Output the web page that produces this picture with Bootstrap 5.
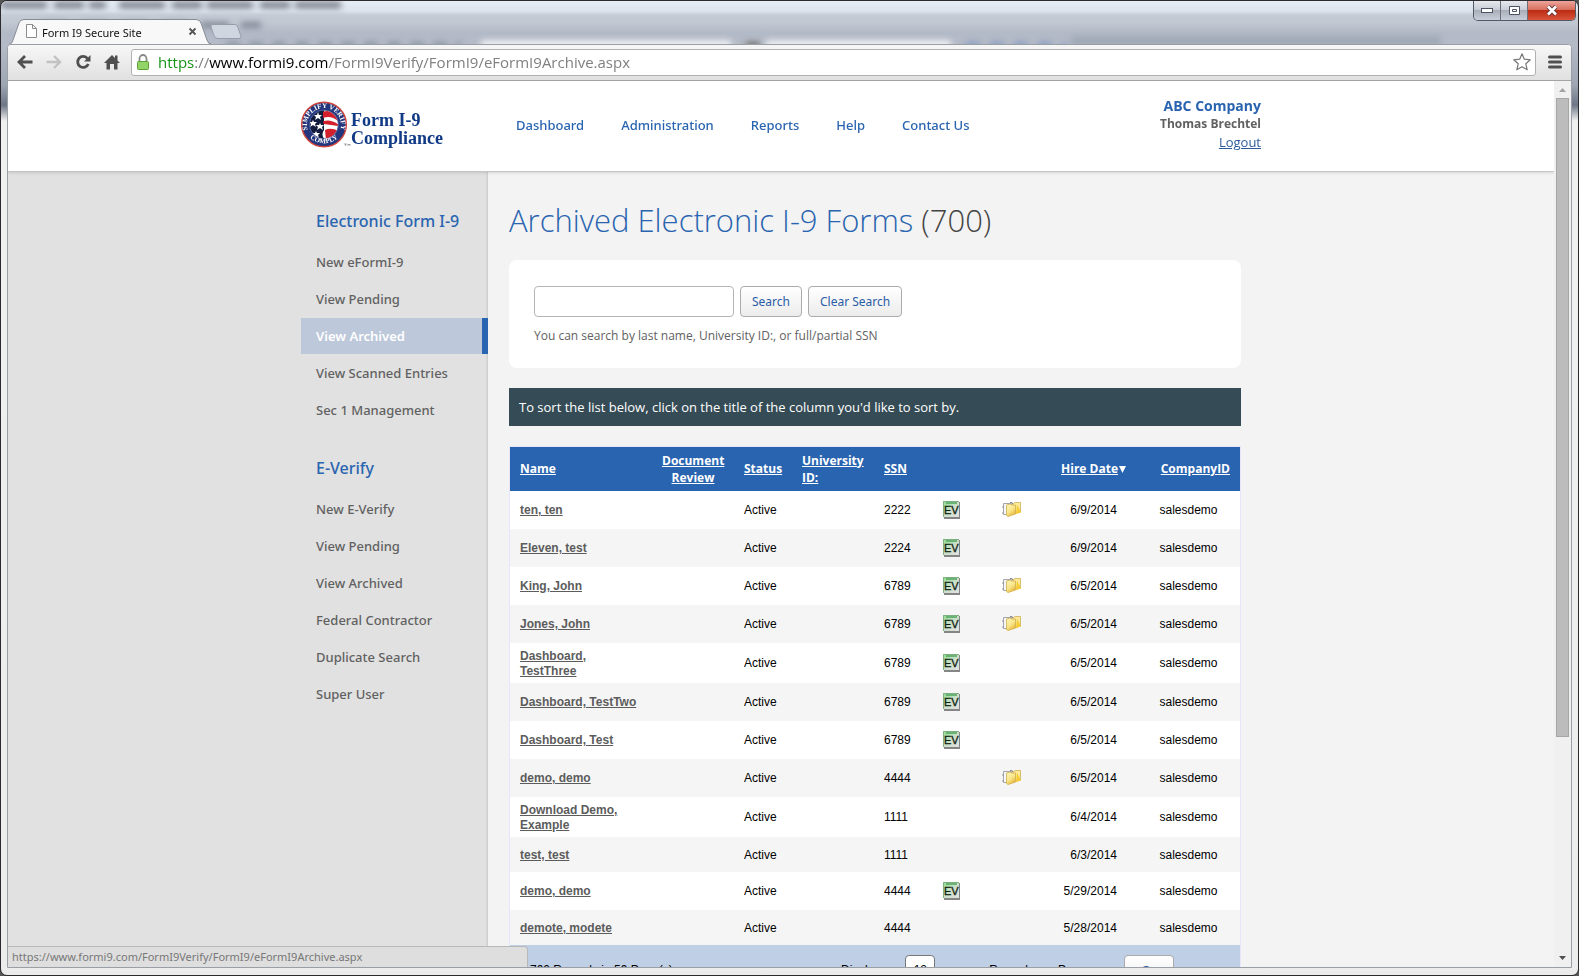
<!DOCTYPE html>
<html lang="en">
<head>
<meta charset="utf-8">
<meta name="viewport" content="width=device-width, initial-scale=1">
<title>Form I9 Secure Site</title>
<link href="https://cdn.jsdelivr.net/npm/bootstrap@5.3.0/dist/css/bootstrap.min.css" rel="stylesheet">
<style>
  :root { --blue: #2964b0; --gray: #616161; }
  body { font-family: "Open Sans", "Noto Sans", sans-serif; font-size: 13px; line-height: 18px; color: var(--gray); background: #555; }
  a { text-decoration: none; }

  /* Window frame */
  .win { border: 1px solid #2b2b2f; border-radius: 7px; padding: 0 6px; overflow: hidden; background: linear-gradient(#e6edf6 0, #dde4ee 10px, #c6ccd6 14px, #c0c7d1 22px, #b3bac7 32px, #b5bbc7 44px, #9ea6b3 84px, #6d7686 104px, #f0f0f0 120px, #ececec 100%); }
  .titlebar { height: 44px; }
  .haze { left: 0; top: 0; width: 100%; height: 46px; }
  .tab-box { width: 206px; height: 25px; margin-left: 2px; color: #111; font: 12px/24px "Noto Sans", sans-serif; }
  .tab-box span { font-size: 11px; padding-top: 3px; }
  .newtab { margin-left: -6px; }
  .plain-btn { border: 0; background: none; padding: 0; line-height: 0; }
  .caps { right: -4px; top: 0; height: 20px; border: 1px solid #555b66; border-top: 0; border-radius: 0 0 5px 5px; overflow: hidden; }
  .caps button { width: 27px; height: 19px; border: 0; border-right: 1px solid #6a707a; padding: 0; line-height: 0; background: linear-gradient(#e6e9ee, #c9ced6 45%, #a9aeb8 50%, #c9cfda); }
  .caps button:last-child { width: 47px; border: 0; background: linear-gradient(#eda49b, #d9705f 45%, #bc2c14 50%, #d8543a); }
  .chrome { margin-bottom: 7px; border: 1px solid #9a9ea5; border-radius: 4px 4px 0 0; background: #fff; }
  .toolbar { height: 36px; padding: 0 9px; background: linear-gradient(#f7f7f7, #e0e0e0); border-bottom: 1px solid #a3a3a3; }
  .tools { gap: 13px; margin-right: 11px; }
  .omnibox { height: 27px; border: 1px solid #b0b0b0; border-radius: 3px; background: #fff; padding: 0 4px; }
  .url { font: 15px/24px "Open Sans", sans-serif; color: #808080; white-space: nowrap; }
  .url .scheme { color: #179317; }
  .url .host { color: #000; }

  /* Site header */
  .site { width: 960px; max-width: 100%; margin: 0 auto; }
  .masthead { height: 91px; background: #fff; border-bottom: 1px solid #c5c5c5; box-shadow: 0 1px 3px rgba(0,0,0,.12); position: relative; z-index: 1; }
  .brand-link { margin-top: 20px; }
  .brand-text { font: bold 18px/18px "Liberation Serif", serif; color: #103a85; padding-top: 10px; }
  .mainnav { gap: 37px; margin: 35px 0 0 73px; }
  .mainnav a { color: var(--blue); font-family: "Noto Sans", sans-serif; font-weight: 500; }
  .acct { text-align: right; margin-top: 16px; }
  .acct a { color: #2b5a9a; text-decoration: underline; line-height: 20px; }
  .acct .firm { font-size: 14px; font-weight: 700; color: var(--blue); }
  .acct .who { font-size: 12px; font-weight: 700; line-height: 17px; }

  /* Sidebar */
  .viewport { background: linear-gradient(90deg, #e1e1e1 50%, #f3f3f3 50%); overflow: hidden; }
  .side { width: 187px; padding-top: 9px; background: #e1e1e1; box-shadow: inset -2px 0 2px -1px #c8c8c8; }
  .pane { background: #f3f3f3; }
  .side h2 { font: 500 16px/20px "Noto Sans", sans-serif; color: var(--blue); padding-left: 15px; margin: 30px 0 14px; }
  .side nav { margin-top: -1px; }
  .side a { display: block; height: 36px; line-height: 36px; margin-bottom: 1px; padding-left: 15px; color: var(--gray); font-family: "Noto Sans", sans-serif; font-weight: 500; }
  .side a.on { background: #bdc8da; color: #fff; font-weight: 600; border-right: 6px solid var(--blue); }

  /* Main column */
  .main { width: 732px; margin-left: 21px; }
  .main h1 { font-size: 31px; line-height: 40px; font-weight: 300; color: var(--blue); margin: 28px 0 20px; }
  .main h1 span { color: #444; }
  .searchbox { background: #fff; border-radius: 8px; height: 108px; padding: 26px 25px; margin-bottom: 20px; }
  .field { height: 31px; width: 200px; border: 1px solid #b5b5b5; border-radius: 4px; background: #fff; }
  .gbtn { height: 31px; border: 1px solid #ababab; border-radius: 4px; background: linear-gradient(#fff, #ececec); color: #2a5ba5; padding: 1px 11px 0; font: 12px/18px "Noto Sans", sans-serif; }
  .tools-row { gap: 6px; }
  .hint { font-size: 12px; margin-top: 10px; }
  .note { background: #354b55; color: #fff; height: 38px; line-height: 38px; padding: 0 10px; margin-bottom: 20px; }
  .grid { table-layout: fixed; width: 732px; border: 1px solid #e6e6fa; font: 12px/15px "Liberation Sans", sans-serif; color: #000; background: #fff; border-collapse: separate; border-spacing: 0; }
  .grid th { background: var(--blue); color: #fff; height: 44px; padding: 5px 10px; font: 700 12px/17px "Open Sans", sans-serif; vertical-align: middle; white-space: nowrap; }
  .grid th a { color: #fff; text-decoration: underline; }
  .grid tbody td { height: 35px; padding: 6px 10px 4px; vertical-align: middle; }
  .grid tbody tr:nth-child(even) { background: #f5f5f5; }
  .grid td a { color: #5c5c5c; font-weight: 700; text-decoration: underline; }
  .grid td svg { display: block; margin: -1px auto 1px; }
  .grid .when { text-align: right; padding-right: 20px; }
  .grid .co { text-align: center; }
  .grid tfoot td { background: #bfcfe6; height: 51px; padding: 0 20px; }
  .grid .per { width: 30px; padding: 0; text-align: center; font-size: 12px; border-color: #777; margin: 0 54px 0 25px; }
  .grid .go { width: 50px; margin-left: 38px; }
  .count { width: 311px; }

  /* Scroll bar and status bubble */
  .sbar { width: 17px; background: #f0f0f0; padding: 0 2px; }
  .thumb { flex: 0 0 75%; background: #bcbcbc; border: 1px solid #a6a6a6; }
  .bubble { left: 0; bottom: 0; width: 520px; height: 21px; background: #dedede; border: 1px solid #b8b8b8; border-left: 0; border-bottom: 0; border-radius: 0 4px 0 0; padding-left: 4px; font: 11px/20px "Noto Sans", sans-serif; color: #777; z-index: 2; }
</style>
</head>
<body>
<svg width="0" height="0" class="position-absolute" aria-hidden="true">
  <defs>
    <linearGradient id="gEv" x1="0" y1="0" x2="1" y2="1"><stop offset="0" stop-color="#8fdc8b"/><stop offset=".5" stop-color="#c9dfc9"/><stop offset="1" stop-color="#e2e2e2"/></linearGradient>
    <linearGradient id="gFold" x1="0" y1="0" x2=".6" y2="1"><stop offset="0" stop-color="#fff7b8"/><stop offset=".6" stop-color="#f9e58a"/><stop offset="1" stop-color="#e6b73a"/></linearGradient>
  </defs>
  <symbol id="ev" viewBox="0 0 18 28">
    <rect x="1" y="6" width="16" height="17" fill="#858585"/><rect x="0" y="5" width="16" height="16" fill="url(#gEv)"/>
    <path d="M3 7h11" stroke="#4fa55f" stroke-width="1.500"/><path d="M.5 21V5.500H16" fill="none" stroke="#7fae7f"/>
    <text x="1" y="18" font-family="Liberation Sans, sans-serif" font-size="11" fill="#10230f" stroke="#10230f" stroke-width=".3">EV</text>
  </symbol>
  <symbol id="folder" viewBox="0 0 20 28">
    <path d="M1.500 7.500h8v11h-8z" fill="#f6f6f8" stroke="#a5a5ad"/><path d="M0 11h2M0 17h2" stroke="#999"/><path d="M8 6.500h2l1 2" fill="none" stroke="#888"/>
    <path d="M11 8l2-1.500h5.500V16L12 18z" fill="#fbeb9b" stroke="#cfae55" stroke-width=".8"/>
    <path d="M4.500 9l4-1 1 1h4V18l-7.500 2.500-1.500-1z" fill="url(#gFold)" stroke="#d0ae4c" stroke-width=".8"/>
    <path d="M15 8.500l4 8-5 1.500z" fill="#f6cb35"/>
  </symbol>
</svg>

<div class="win vh-100 d-flex flex-column position-relative">
  <svg class="haze position-absolute" aria-hidden="true">
    <defs><filter id="soft" x="-20%" y="-100%" width="140%" height="300%"><feGaussianBlur stdDeviation="3"/></filter></defs>
    <g filter="url(#soft)">
      <path d="M0 4h105M118 4h222" stroke="#70757f" stroke-width="6" stroke-dasharray="46 7 30 5"/>
      <path d="M40 24h220" stroke="#747c8a" stroke-width="5" stroke-dasharray="28 12"/>
      <path d="M225 44h235" stroke="#7f8b99" stroke-width="5" stroke-dasharray="14 9"/>
      <path d="M480 44h250M765 44h185" stroke="#f2f4f7" stroke-width="9"/>
      <path d="M745 44h14" stroke="#635f54" stroke-width="5"/>
      <path d="M965 44h100" stroke="#7c95bf" stroke-width="5" stroke-dasharray="14 10"/>
      <path d="M1070 40h370" stroke="#929bab" stroke-width="9" opacity=".6"/>
    </g>
  </svg>

  <div class="titlebar d-flex align-items-end position-relative">
    <div class="tab-box position-relative d-flex align-items-center">
      <svg class="position-absolute top-0 start-0" width="206" height="26" aria-hidden="true"><path d="M0 25.500Q3 25 4 21L10 4Q11 .5 15 .5H187Q191 .5 192 4L198 21Q199 25 203 25.500" fill="#f8f8f8" stroke="#858b95"/></svg>
      <svg class="position-relative ms-3" width="13" height="16" viewBox="0 0 13 16" aria-hidden="true"><path d="M1.500 1.500h6l4 4v9h-10zM7.500 1.500v4h4" fill="#fff" stroke="#8c8c8c"/></svg>
      <span class="position-relative ms-1 flex-grow-1">Form I9 Secure Site</span>
      <button class="plain-btn position-relative me-3" aria-label="Close tab"><svg width="11" height="9" viewBox="0 0 11 9"><path d="M1.500 1.500l6 6M7.500 1.500l-6 6" stroke="#555" stroke-width="1.800"/></svg></button>
    </div>
    <button class="plain-btn newtab align-self-end" aria-label="New tab"><svg width="34" height="20" viewBox="0 0 34 20"><path d="M4 .5h22q2 0 3 3l3 9q0 2-2 2H9q-3 0-4-3L2 3Q1 .5 4 .5z" fill="#cfd6df" stroke="#959daa"/></svg></button>
    <div class="caps position-absolute d-flex">
      <button aria-label="Minimize"><svg width="13" height="7"><rect x=".5" y="1.500" width="11" height="4" fill="#fff" stroke="#4c5262"/></svg></button>
      <button aria-label="Restore"><svg width="13" height="11"><path d="M1.500 1.500h10v8h-10zM4.500 4.500h4v2h-4z" fill="#fff" stroke="#4c5262"/></svg></button>
      <button aria-label="Close window"><svg width="14" height="11" viewBox="0 0 14 11"><path d="M3 1.500l8 8M11 1.500l-8 8" stroke="#5b3a40" stroke-width="4.500"/><path d="M3 1.500l8 8M11 1.500l-8 8" stroke="#fff" stroke-width="2.600"/></svg></button>
    </div>
  </div>

  <div class="chrome flex-grow-1 d-flex flex-column position-relative overflow-hidden">
    <div class="toolbar d-flex align-items-center flex-shrink-0">
      <div class="tools d-flex align-items-center">
        <button class="plain-btn" aria-label="Back"><svg width="16" height="16" viewBox="0 0 16 16"><path d="M15.500 8H3M8 2L2 8l6 6" fill="none" stroke="#4f4f4f" stroke-width="2.800"/></svg></button>
        <button class="plain-btn" aria-label="Forward"><svg width="16" height="16" viewBox="0 0 16 16"><path d="M.5 8h12M8 2l6 6-6 6" fill="none" stroke="#c2c2c2" stroke-width="2.400"/></svg></button>
        <button class="plain-btn" aria-label="Reload"><svg width="16" height="16" viewBox="0 0 16 16"><path d="M12.500 4.500A5.500 5.500 0 1 0 13.300 10" fill="none" stroke="#4f4f4f" stroke-width="2.800"/><path d="M15.500 1v6.500H9z" fill="#4f4f4f"/></svg></button>
        <button class="plain-btn" aria-label="Home"><svg width="16" height="16" viewBox="0 0 16 16"><path d="M0 9l8-8 3 3V1.500h2.500V6.500L16 9h-2.500v6.500H10V10H6v5.500H2.500V9z" fill="#4f4f4f"/></svg></button>
      </div>
      <div class="omnibox d-flex align-items-center flex-grow-1 me-1">
        <svg width="14" height="17" viewBox="0 0 14 17" aria-hidden="true"><path d="M3.500 8V4.500a3.500 3.500 0 0 1 7 0V8" fill="none" stroke="#8a8a8a" stroke-width="1.800"/><rect x="1.500" y="7.500" width="11" height="8" rx="1" fill="#93d468" stroke="#5aa136"/></svg>
        <div class="url flex-grow-1 ms-2"><span class="scheme">https</span>://<span class="host">www.formi9.com</span>/FormI9Verify/FormI9/eFormI9Archive.aspx</div>
        <button class="plain-btn" aria-label="Bookmark"><svg width="18" height="18" viewBox="0 0 18 18"><path d="M9 .8l2.300 5.400 6 .6-4.500 4 1.400 6L9 13.700l-5.200 3.100 1.400-6L.7 6.800l6-.6z" fill="#fff" stroke="#777" stroke-width="1.200" stroke-linejoin="round"/></svg></button>
      </div>
      <button class="plain-btn ms-2" aria-label="Menu"><svg width="14" height="14" viewBox="0 0 14 14"><path d="M1.500 2h11M1.500 7h11M1.500 12h11" stroke="#505050" stroke-width="3" stroke-linecap="round"/></svg></button>
    </div>

    <div class="d-flex flex-grow-1 overflow-hidden">
      <div class="viewport flex-grow-1 d-flex flex-column">
        <header class="masthead flex-shrink-0">
          <div class="site d-flex">
            <a href="#" class="brand-link d-flex" aria-label="Form I-9 Compliance">
              <svg width="50" height="48" viewBox="0 0 50 48" aria-hidden="true">
                <defs><path id="arcTop" d="M9.500 34.500A17 17 0 1 1 36.500 34.500"/><path id="arcBot" d="M6.500 34A20.500 20.500 0 0 0 39.500 34"/><clipPath id="disc"><circle cx="23" cy="23.500" r="14"/></clipPath></defs>
                <circle cx="23" cy="23.500" r="22.300" fill="#23357c" stroke="#d0453c" stroke-width="1.500"/>
                <g clip-path="url(#disc)"><path d="M8 9h32v30H8z" fill="#101a3c"/><path d="M23 9h17v30H25q-6-4-2-10z" fill="#fff"/>
                  <path d="M22 11q7-3 15 4v5q-7-6-15-3zM23 23q-2-2 0-3 7-2 15 4l-1 1zM24 29q6-3 14 1l-4 9h-9z" fill="#d21f2b"/>
                  <path d="M17 11l1 3h3l-2 2 1 3-3-2-3 2 1-3-2-2h3zM12 19l1 2h3l-2 2 1 3-3-2-3 2 1-3-2-2h3zM19 22l1 2h3l-2 2 1 3-3-2-3 2 1-3-2-2h3zM15 30l1 2h3l-2 2 1 3-3-2-3 2 1-3-2-2h3z" fill="#fff"/></g>
                <circle cx="23" cy="23.500" r="14.500" fill="none" stroke="#6c7fb4" stroke-width=".6"/>
                <g font-family="Liberation Serif, serif" font-weight="700" font-size="7" fill="#fff"><text><textPath href="#arcTop" startOffset="50%" text-anchor="middle">SIMPLIFY VERIFY</textPath></text><text><textPath href="#arcBot" startOffset="50%" text-anchor="middle">COMPLY</textPath></text></g>
                <path d="M43 43h3M44.500 43v2M47 45v-2l1 1 1-1v2" fill="none" stroke="#777" stroke-width=".6"/>
              </svg>
              <span class="brand-text">Form I-9<br>Compliance</span>
            </a>
            <nav class="mainnav d-flex">
              <a href="#">Dashboard</a><a href="#">Administration</a><a href="#">Reports</a><a href="#">Help</a><a href="#">Contact Us</a>
            </nav>
            <div class="acct ms-auto">
              <div class="firm">ABC Company</div>
              <div class="who">Thomas Brechtel</div>
              <a href="#" class="d-block">Logout</a>
            </div>
          </div>
        </header>

        <div class="site d-flex flex-grow-1">
          <aside class="side flex-shrink-0">
            <h2>Electronic Form I-9</h2>
            <nav>
              <a href="#">New eFormI-9</a><a href="#">View Pending</a><a href="#" class="on">View Archived</a><a href="#">View Scanned Entries</a><a href="#">Sec 1 Management</a>
            </nav>
            <h2>E-Verify</h2>
            <nav>
              <a href="#">New E-Verify</a><a href="#">View Pending</a><a href="#">View Archived</a><a href="#">Federal Contractor</a><a href="#">Duplicate Search</a><a href="#">Super User</a>
            </nav>
          </aside>
          <div class="pane flex-grow-1">
            <main class="main">
              <h1>Archived Electronic I-9 Forms <span>(700)</span></h1>
              <form class="searchbox" onsubmit="return false">
                <div class="tools-row d-flex">
                  <input type="text" id="q" class="field" aria-describedby="qhint" aria-label="Search archived forms">
                  <button class="gbtn">Search</button>
                  <button class="gbtn" type="reset">Clear Search</button>
                </div>
                <label for="q" id="qhint" class="hint d-block">You can search by last name, University ID:, or full/partial SSN</label>
              </form>
              <div class="note">To sort the list below, click on the title of the column you'd like to sort by.</div>
              <table class="grid">
                <colgroup><col style="width:142px"><col style="width:82px"><col style="width:58px"><col style="width:82px"><col style="width:48px"><col style="width:60px"><col style="width:60px"><col style="width:95px"><col></colgroup>
                <thead><tr>
                  <th><a href="#">Name</a></th><th class="text-center"><a href="#">Document<br>Review</a></th><th><a href="#">Status</a></th><th><a href="#">University<br>ID:</a></th><th><a href="#">SSN</a></th><th></th><th></th><th class="text-end"><a href="#">Hire Date</a><svg width="9" height="9" viewBox="0 0 9 9" aria-hidden="true"><path d="M1 1h7L4.500 8z" fill="#fff"/></svg></th><th class="text-end"><a href="#">CompanyID</a></th>
                </tr></thead>
                <tbody id="rows"></tbody>
                <tfoot><tr><td colspan="9"><div class="d-flex align-items-center">
                  <span class="count">700 Records in 59 Page(s)</span>
                  <label for="per">Display</label>
                  <input id="per" class="field per" value="12">
                  <span>Records per Page</span>
                  <button class="gbtn go">Go</button>
                </div></td></tr></tfoot>
              </table>
            </main>
          </div>
        </div>
      </div>
      <div class="sbar d-flex flex-column flex-shrink-0" aria-hidden="true">
        <svg width="13" height="17"><path d="M3 11h7l-3.500-4z" fill="#a3a3a3"/></svg>
        <div class="flex-grow-1 d-flex flex-column"><div class="thumb"></div></div>
        <svg width="13" height="17"><path d="M3 6h7l-3.500 4z" fill="#505050"/></svg>
      </div>
    </div>
    <div class="bubble position-absolute">https://www.formi9.com/FormI9Verify/FormI9/eFormI9Archive.aspx</div>
  </div>
</div>

<script>
  // name, SSN, E-Verify flag, documents flag, hire date
  const people = [
    ["ten, ten", "2222", 1, 1, "6/9/2014"],
    ["Eleven, test", "2224", 1, 0, "6/9/2014"],
    ["King, John", "6789", 1, 1, "6/5/2014"],
    ["Jones, John", "6789", 1, 1, "6/5/2014"],
    ["Dashboard, TestThree", "6789", 1, 0, "6/5/2014"],
    ["Dashboard, TestTwo", "6789", 1, 0, "6/5/2014"],
    ["Dashboard, Test", "6789", 1, 0, "6/5/2014"],
    ["demo, demo", "4444", 0, 1, "6/5/2014"],
    ["Download Demo, Example", "1111", 0, 0, "6/4/2014"],
    ["test, test", "1111", 0, 0, "6/3/2014"],
    ["demo, demo", "4444", 1, 0, "5/29/2014"],
    ["demote, modete", "4444", 0, 0, "5/28/2014"]
  ];
  document.getElementById("rows").innerHTML = people.map(p => `<tr>
    <td><a href="#">${p[0]}</a></td><td></td><td>Active</td><td></td><td>${p[1]}</td>
    <td>${p[2] ? '<svg width="18" height="28" role="img" aria-label="E-Verify"><use href="#ev"/></svg>' : ""}</td>
    <td>${p[3] ? '<svg width="20" height="28" role="img" aria-label="Documents"><use href="#folder"/></svg>' : ""}</td>
    <td class="when">${p[4]}</td><td class="co">salesdemo</td></tr>`).join("");
</script>
<script src="https://cdn.jsdelivr.net/npm/bootstrap@5.3.0/dist/js/bootstrap.bundle.min.js"></script>
</body>
</html>
